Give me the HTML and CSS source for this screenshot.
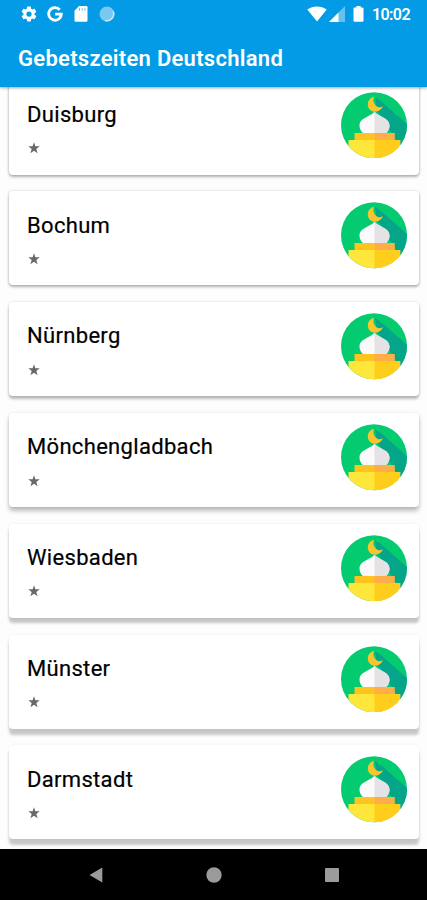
FILE: index.html
```
<!DOCTYPE html>
<html lang="de">
<head>
    <meta charset="UTF-8">
    <meta name="viewport" content="width=device-width, initial-scale=1.0">
    <title>Gebetszeiten Deutschland</title>
    <link rel="stylesheet" href="styles.css">
</head>
<body>
    <svg class="sprite" width="0" height="0">
        <clipPath id="circle"><circle cx="33" cy="33.200" r="33"/></clipPath>
        <symbol id="mosque" viewBox="0 0 66 66.5">
            <g clip-path="url(#circle)">
                <rect width="66" height="67" fill="#04cb70"/>
                <path d="M34 5l7 5 25 22v22h-7L36 18z" fill="#05a589"/>
                <path d="M33 4.800c-3.700 1-6.200 4-6.200 7.600 0 4.200 3.200 7.200 7.300 7.200 3.700 0 6.800-2.200 7.900-5.600-1.300 1-2.700 1.400-4 1.200-4.200-.6-6.800-5.600-5-10.400z" fill="#f8c52f"/>
                <path d="M33.500 19.300c-2 5-15 6-15 14.200 0 3.500 1.500 6 4 8h22c2.500-2 4-4.500 4-8 0-8.200-13-9.200-15-14.200z" fill="#fbf9fa"/>
                <path d="M33.500 19.300c2 5 15 6 15 14.200 0 3.500-1.500 6-4 8h-11z" fill="#e5e2e5"/>
                <path d="M13.500 41h40v8h-40z" fill="#fdc31f"/>
                <path d="M33.500 41h20v8h-20z" fill="#ffad48"/>
                <path d="M7.500 48h51.700v19H7.500z" fill="#ffe63b"/>
                <path d="M33.500 48h25.700v19H33.500z" fill="#ffce1c"/>
            </g>
        </symbol>
        <symbol id="star" viewBox="0 0 12 12">
            <path d="M6 .3l1.400 4h4.300L8.300 6.900l1.300 4.300L6 8.700l-3.600 2.500 1.300-4.300L.3 4.300h4.300z" fill="#686868"/>
        </symbol>
    </svg>

    <header class="header">
        <div class="status-bar">
            <svg class="gear" width="18" height="18" viewBox="0 0 24 24"><path fill="#fff" d="M19.400 13a7.500 7.500 0 0 0 0-2l2.100-1.600c.2-.2.300-.5.100-.7l-2-3.400c-.1-.3-.4-.3-.6-.3l-2.500 1a7 7 0 0 0-1.700-1l-.4-2.600c0-.3-.2-.4-.4-.4h-4c-.3 0-.5.1-.5.400L9.100 5a7 7 0 0 0-1.700 1L5 5c-.3-.1-.5 0-.7.300l-2 3.400c-.1.200 0 .5.200.7L4.600 11a7.500 7.500 0 0 0 0 2l-2.100 1.600c-.2.200-.3.500-.2.700l2 3.400c.2.300.4.300.7.300l2.400-1a7 7 0 0 0 1.700 1l.4 2.600c0 .3.200.4.500.4h4c.2 0 .4-.1.400-.4l.4-2.600a7 7 0 0 0 1.700-1l2.500 1c.2 0 .5 0 .6-.3l2-3.400c.2-.2.100-.5-.1-.7zM12 15.500a3.500 3.500 0 1 1 0-7 3.500 3.500 0 0 1 0 7z"/></svg>
            <svg class="google" width="16" height="16" viewBox="0 0 16 16"><path fill="none" stroke="#fff" stroke-width="2.800" d="M12.700 3.700A6.300 6.300 0 1 0 14.300 8.200H8.200"/></svg>
            <svg class="sd" width="14" height="16" viewBox="0 0 14 16"><path fill="#fff" d="M5 0h7.300q1.200 0 1.200 1.200v13.300q0 1.300-1.200 1.300H1.700q-1.200 0-1.200-1.300V4.700z"/><path stroke="#5fbdee" stroke-width="1" d="M5.500 2.200v2.500M8.200 2.200v2.500M10.900 2.200v2.500"/></svg>
            <svg class="sync" width="16" height="16" viewBox="0 0 16 16"><circle cx="8" cy="8" r="7.500" fill="#79c8f1"/><path d="M14 5A6.800 6.800 0 0 1 6 14.500" fill="none" stroke="#c5e8fa" stroke-width="1.500"/></svg>
            <span class="spacer"></span>
            <svg class="wifi" width="20" height="16" viewBox="0 0 20 16"><path fill="#fff" d="M10 15.600L.3 3.500C5.800-.6 14.200-.6 19.700 3.500z"/></svg>
            <svg class="signal" width="16" height="16" viewBox="0 0 16 16"><path fill="#67c1ef" d="M16 0v16H0z"/><path fill="#fff" d="M9.500 6.500V16H0z"/></svg>
            <svg class="battery" width="11" height="16" viewBox="0 0 11 16"><path fill="#fff" d="M3.300 0h4.400v1.500h1.800q1 0 1 1v12.300q0 1-1 1h-8q-1 0-1-1V2.500q0-1 1-1h1.800z"/></svg>
            <span class="clock">10:02</span>
        </div>
        <h1>Gebetszeiten Deutschland</h1>
    </header>

    <main class="list">
        <div class="card">
            <div class="info"><h2>Duisburg</h2><svg class="star"><use href="#star"/></svg></div>
            <svg class="mosque"><use href="#mosque"/></svg>
        </div>
        <div class="card">
            <div class="info"><h2>Bochum</h2><svg class="star"><use href="#star"/></svg></div>
            <svg class="mosque"><use href="#mosque"/></svg>
        </div>
        <div class="card">
            <div class="info"><h2>Nürnberg</h2><svg class="star"><use href="#star"/></svg></div>
            <svg class="mosque"><use href="#mosque"/></svg>
        </div>
        <div class="card">
            <div class="info"><h2>Mönchengladbach</h2><svg class="star"><use href="#star"/></svg></div>
            <svg class="mosque"><use href="#mosque"/></svg>
        </div>
        <div class="card">
            <div class="info"><h2>Wiesbaden</h2><svg class="star"><use href="#star"/></svg></div>
            <svg class="mosque"><use href="#mosque"/></svg>
        </div>
        <div class="card">
            <div class="info"><h2>Münster</h2><svg class="star"><use href="#star"/></svg></div>
            <svg class="mosque"><use href="#mosque"/></svg>
        </div>
        <div class="card">
            <div class="info"><h2>Darmstadt</h2><svg class="star"><use href="#star"/></svg></div>
            <svg class="mosque"><use href="#mosque"/></svg>
        </div>
    </main>

    <nav class="nav-bar">
        <svg width="14" height="16" viewBox="0 0 14 16"><path fill="#9b9b9b" d="M13.300.5v15L.5 8z"/></svg>
        <svg width="16" height="16" viewBox="0 0 16 16"><circle cx="8" cy="8" r="7.700" fill="#9b9b9b"/></svg>
        <svg width="14" height="14" viewBox="0 0 14 14"><rect width="14" height="14" rx="1" fill="#9b9b9b"/></svg>
    </nav>
</body>
</html>
```

FILE: styles.css
```
* {
    box-sizing: border-box;
}
body {
    margin: 0;
    height: 900px;
    display: flex;
    flex-direction: column;
    overflow: hidden;
    background-color: #fdfdfd;
    font-family: Roboto, sans-serif;
}
.sprite {
    position: absolute;
}
svg {
    display: block;
    flex-shrink: 0;
}
h1, h2 {
    margin: 0;
    font-weight: 500;
    white-space: nowrap;
}
.header {
    position: relative;
    z-index: 1;
    flex: 0 0 87px;
    background-color: #039be5;
    color: white;
    box-shadow: 0 1px 3px rgba(0, 0, 0, 0.35);
}
.header h1 {
    padding: 18px 18px 0;
    font-size: 22px;
    font-weight: 600;
    line-height: 26px;
    letter-spacing: 0.28px;
}
.status-bar {
    display: flex;
    align-items: center;
    height: 28px;
    padding: 0 16px 0 20px;
}
.google {
    margin-left: 9px;
}
.sd {
    margin-left: 11px;
}
.sync {
    margin-left: 11px;
}
.spacer {
    flex: 1;
}
.signal {
    margin-left: 2px;
}
.battery {
    margin-left: 8px;
}
.clock {
    margin-left: 8px;
    width: 39px;
    font-size: 16px;
    font-weight: 600;
    line-height: 29px;
    letter-spacing: -0.6px;
}
.list {
    flex: 1;
    min-height: 0;
    overflow: hidden;
    padding: 0 8px 0 9px;
}
.card {
    display: flex;
    justify-content: space-between;
    height: 94px;
    margin-bottom: 16.8px;
    padding: 11px 12.5px 0 18px;
    background-color: white;
    border-radius: 4px;
    box-shadow: 0 2px 3px rgba(0, 0, 0, 0.28), 0 0 3px rgba(0, 0, 0, 0.16);
}
.card:first-child {
    margin-top: -6.4px;
}
.card:nth-child(3) {
    box-shadow: 0 3px 3px rgba(0, 0, 0, 0.26), 0 0 3px rgba(0, 0, 0, 0.14);
}
.card:nth-child(4) {
    box-shadow: 0 4px 4px rgba(0, 0, 0, 0.25), 0 0 3px rgba(0, 0, 0, 0.1);
}
.card:nth-child(5) {
    box-shadow: 0 5px 3px rgba(0, 0, 0, 0.22), 0 0 3px rgba(0, 0, 0, 0.08);
}
.card:nth-child(n+6) {
    box-shadow: 0 6px 3px rgba(0, 0, 0, 0.21), 0 0 3px rgba(0, 0, 0, 0.06);
}
.card h2 {
    padding-top: 10.2px;
    font-size: 22px;
    font-weight: 400;
    line-height: 26px;
    letter-spacing: 0.32px;
    color: black;
    -webkit-text-stroke: 0.2px black;
}
.star {
    width: 12px;
    height: 12px;
    margin: 14.5px 0 0 0.5px;
}
.mosque {
    width: 66px;
    height: 66.5px;
}
.nav-bar {
    flex: 0 0 51px;
    display: flex;
    align-items: center;
    gap: 103px;
    padding-left: 89px;
    background-color: black;
}
```
